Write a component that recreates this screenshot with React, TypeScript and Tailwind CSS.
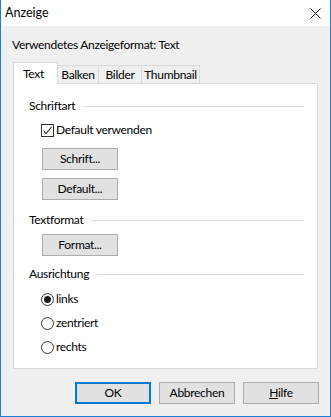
import React, { useState } from "react";

const font = { fontFamily: 'Lato, "Noto Sans", "Liberation Sans", sans-serif' };

type GroupProps = { title: string };

const GroupTitle: React.FC<GroupProps> = ({ title }) => (
  <div className="flex items-center h-[16px] pr-[13px]">
    <span>{title}</span>
    <div className="flex-1 h-px bg-[#d8e0e8] ml-[8px]" />
  </div>
);

const Button: React.FC<{ children: React.ReactNode; primary?: boolean; className?: string }> = ({
  children,
  primary,
  className,
}) => (
  <button
    className={
      "h-[22px] w-[76px] bg-[#e1e1e1] text-[12px] text-black flex items-center justify-center " +
      (primary ? "border-2 border-[#0078d7] " : "border border-[#adadad] ") +
      (className ?? "")
    }
  >
    {children}
  </button>
);

const Radio: React.FC<{ label: string; checked: boolean; onClick: () => void }> = ({ label, checked, onClick }) => (
  <div className="flex items-center h-[16px] ml-[12px] cursor-default" onClick={onClick}>
    <div className="w-[13px] h-[13px] rounded-full border border-[#333] bg-white flex items-center justify-center">
      {checked && <div className="w-[7px] h-[7px] rounded-full bg-[#1a1a1a]" />}
    </div>
    <span className="ml-[2px]">{label}</span>
  </div>
);

const App: React.FC = () => {
  const [align, setAlign] = useState("links");
  const [useDefault, setUseDefault] = useState(true);

  return (
    <div
      className="w-[331px] h-[417px] border border-t-0 border-[#1c80d6] bg-[#f0f0f0] flex flex-col text-[12px] tracking-[-0.3px] text-black"
      style={font}
    >
      {/* Title bar */}
      <div className="h-[26px] bg-white flex items-center justify-between pl-[4px] pr-[9px]">
        <span className="text-[12.5px] tracking-normal">Anzeige</span>
        <svg width="11" height="11" viewBox="0 0 11 11" className="mt-[1px]">
          <path d="M0.5 0.5 L10.5 10.5 M10.5 0.5 L0.5 10.5" stroke="#111" strokeWidth="1" />
        </svg>
      </div>

      <div className="pl-[11px] pt-[10px] h-[16px] box-content">Verwendetes Anzeigeformat: Text</div>

      {/* Tabs */}
      <div className="flex items-end ml-[12px] mt-[10px] h-[21px] relative z-10">
        <div className="w-[45px] h-[22px] bg-white border border-b-0 border-[#d9d9d9] flex items-center justify-center pr-[4px] mb-[-1px]">
          Text
        </div>
        <div className="w-[41px] h-[18px] border-t border-r border-[#d9d9d9] flex items-center justify-center">
          Balken
        </div>
        <div className="w-[43px] h-[18px] border-t border-r border-[#d9d9d9] flex items-center justify-center">
          Bilder
        </div>
        <div className="w-[58px] h-[18px] border-t border-r border-[#d9d9d9] flex items-center justify-center">
          Thumbnail
        </div>
      </div>

      {/* Panel */}
      <div className="mx-[12px] h-[286px] border border-[#d9d9d9] bg-white pl-[15px] pt-[14px] flex flex-col">
        <GroupTitle title="Schriftart" />
        <div className="flex items-center h-[16px] ml-[12px] mt-[8px]" onClick={() => setUseDefault(!useDefault)}>
          <div className="w-[13px] h-[13px] border border-[#333] bg-white flex items-center justify-center">
            {useDefault && (
              <svg width="11" height="11" viewBox="0 0 11 11">
                <path d="M1.5 5.5 L4 8.5 L9.5 2" fill="none" stroke="#222" strokeWidth="1.1" />
              </svg>
            )}
          </div>
          <span className="ml-[2px]">Default verwenden</span>
        </div>
        <Button className="ml-[13px] mt-[10px]">Schrift...</Button>
        <Button className="ml-[13px] mt-[8px]">Default...</Button>

        <div className="mt-[12px]">
          <GroupTitle title="Textformat" />
        </div>
        <Button className="ml-[13px] mt-[6px]">Format...</Button>

        <div className="mt-[10px]">
          <GroupTitle title="Ausrichtung" />
        </div>
        <div className="flex flex-col gap-[8px] mt-[9px]">
          <Radio label="links" checked={align === "links"} onClick={() => setAlign("links")} />
          <Radio label="zentriert" checked={align === "zentriert"} onClick={() => setAlign("zentriert")} />
          <Radio label="rechts" checked={align === "rechts"} onClick={() => setAlign("rechts")} />
        </div>
      </div>

      {/* Dialog buttons */}
      <div className="flex justify-end gap-[8px] pr-[11px] mt-[13px]">
        <Button primary className="w-[75px]">OK</Button>
        <Button>Abbrechen</Button>
        <Button>
          <span>
            <span className="underline">H</span>ilfe
          </span>
        </Button>
      </div>
    </div>
  );
};

export default App;
